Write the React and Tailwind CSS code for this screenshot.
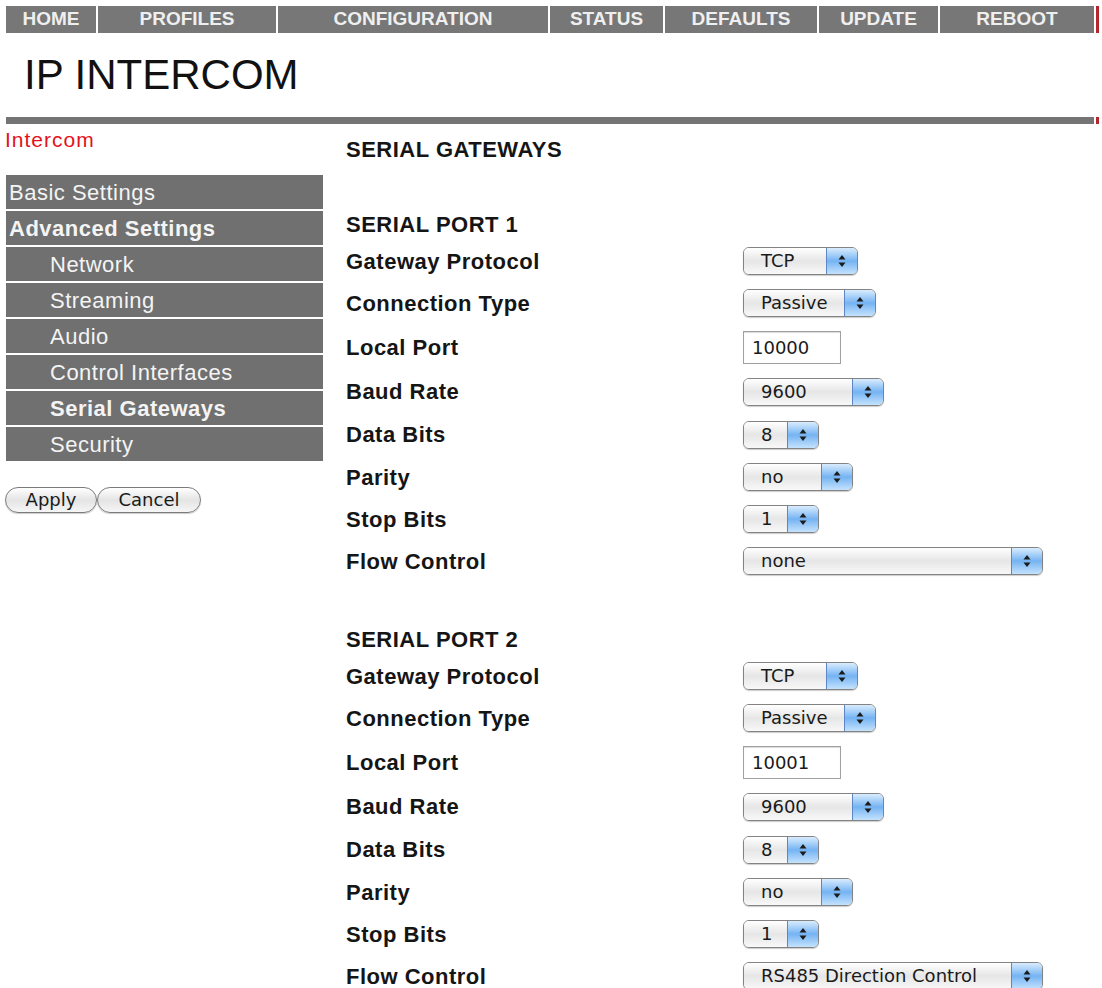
import React from 'react';

const NAV_ITEMS = [
  { label: 'HOME', w: 'w-[90px]' },
  { label: 'PROFILES', w: 'w-[178px]' },
  { label: 'CONFIGURATION', w: 'w-[270px]' },
  { label: 'STATUS', w: 'w-[113px]' },
  { label: 'DEFAULTS', w: 'w-[152px]' },
  { label: 'UPDATE', w: 'w-[119px]' },
  { label: 'REBOOT', w: 'w-[154px]' },
];

const MENU = [
  { label: 'Basic Settings', sub: false, bold: false },
  { label: 'Advanced Settings', sub: false, bold: true },
  { label: 'Network', sub: true, bold: false },
  { label: 'Streaming', sub: true, bold: false },
  { label: 'Audio', sub: true, bold: false },
  { label: 'Control Interfaces', sub: true, bold: false },
  { label: 'Serial Gateways', sub: true, bold: true },
  { label: 'Security', sub: true, bold: false },
];

const UpDownArrows = () => (
  <svg width="8" height="12" viewBox="0 0 8 12">
    <polygon points="4,0 7.5,4.5 0.5,4.5" fill="#1b1b1b" />
    <polygon points="0.5,7.5 7.5,7.5 4,12" fill="#1b1b1b" />
  </svg>
);

// mac "aqua" style popup button
const AquaSelect = ({ value, className }) => (
  <div
    className={`${className} flex h-[28px] overflow-hidden rounded-[6px] border border-[#838383] shadow-[0_1px_1px_rgba(0,0,0,0.2)]`}
  >
    <div className="flex flex-1 items-center bg-linear-to-b from-[#ffffff] via-[#e6e6e6] to-[#f8f8f8] pl-[17px] font-['DejaVu_Sans',Verdana,sans-serif] text-[18px] leading-none text-[#1a1a1a] whitespace-nowrap">
      {value}
    </div>
    <div className="flex w-[31px] items-center justify-center border-l border-[#5c87c4] bg-linear-to-b from-[#d9ecfd] via-[#74b3f2] to-[#c4e2fd]">
      <UpDownArrows />
    </div>
  </div>
);

const PortInput = ({ value }) => (
  <div className="flex h-[33px] w-[98px] items-center border border-[#a0a0a0] bg-white pl-[8px] shadow-[inset_0_1px_1px_rgba(0,0,0,0.15)] font-['DejaVu_Sans',Verdana,sans-serif] text-[18px] text-[#1a1a1a]">
    {value}
  </div>
);

const portRows = (port, flow) => [
  { label: 'Gateway Protocol', h: 'h-[42px]', ctrl: <AquaSelect value="TCP" className="w-[115px]" /> },
  { label: 'Connection Type', h: 'h-[42px]', ctrl: <AquaSelect value="Passive" className="w-[133px]" /> },
  { label: 'Local Port', h: 'h-[46px]', ctrl: <PortInput value={port} /> },
  { label: 'Baud Rate', h: 'h-[43px]', ctrl: <AquaSelect value="9600" className="w-[141px]" /> },
  { label: 'Data Bits', h: 'h-[43px]', ctrl: <AquaSelect value="8" className="w-[76px]" /> },
  { label: 'Parity', h: 'h-[42px]', ctrl: <AquaSelect value="no" className="w-[110px]" /> },
  { label: 'Stop Bits', h: 'h-[42px]', ctrl: <AquaSelect value="1" className="w-[76px]" /> },
  { label: 'Flow Control', h: 'h-[42px]', ctrl: <AquaSelect value={flow} className="w-[300px]" /> },
];

const SerialPort = ({ title, port, flow, className }) => (
  <div className={className}>
    <div className="text-[22px] font-bold leading-[24px] tracking-[0.5px] text-[#151515]">{title}</div>
    <div className="mt-[3px]">
      {portRows(port, flow).map((row) => (
        <div key={row.label} className={`${row.h} flex items-center`}>
          <div className="w-[397px] text-[22px] font-bold tracking-[0.5px] text-[#151515]">{row.label}</div>
          {row.ctrl}
        </div>
      ))}
    </div>
  </div>
);

const AquaButton = ({ children, className }) => (
  <button
    className={`${className} h-[26px] rounded-full border border-[#7b7b7b] bg-linear-to-b from-[#ffffff] via-[#e4e4e4] to-[#f6f6f6] font-['DejaVu_Sans',Verdana,sans-serif] text-[18px] leading-none text-[#1a1a1a] shadow-[0_1px_1px_rgba(0,0,0,0.2)]`}
  >
    {children}
  </button>
);

export default function App() {
  return (
    <div className="min-h-screen bg-white font-['Liberation_Sans',Arial,sans-serif] text-[#111]">
      {/* top navigation */}
      <div className="flex h-[33px] gap-[2px] pl-[6px] pt-[6px]">
        {NAV_ITEMS.map((item) => (
          <div
            key={item.label}
            className={`${item.w} flex items-center justify-center bg-[#777777] text-[19px] font-bold text-[#efefef]`}
          >
            {item.label}
          </div>
        ))}
        <div className="w-[3px] bg-[#b3262d]" />
      </div>

      <h1 className="ml-[24px] mt-[21px] text-[42px] leading-[42px] text-[#111]">IP INTERCOM</h1>

      <div className="ml-[6px] mt-[21px] flex h-[7px] gap-[2px]">
        <div className="w-[1088px] bg-[#747474]" />
        <div className="w-[3px] bg-[#b3262d]" />
      </div>

      <div className="flex">
        {/* left menu */}
        <div className="w-[323px] shrink-0">
          <div className="pl-[5px] pt-[6px] text-[21px] leading-[20px] tracking-[1px] text-[#e3121c]">Intercom</div>
          <div className="ml-[6px] mt-[25px] flex w-[317px] flex-col gap-[2px]">
            {MENU.map((item) => (
              <div
                key={item.label}
                className={`flex h-[34px] items-center bg-[#707070] text-[22px] tracking-[0.5px] text-[#f4f4f4] ${
                  item.sub ? 'pl-[44px]' : 'pl-[3px]'
                } ${item.bold ? 'font-bold' : ''}`}
              >
                {item.label}
              </div>
            ))}
          </div>
          <div className="ml-[5px] mt-[26px] flex">
            <AquaButton className="w-[92px]">Apply</AquaButton>
            <AquaButton className="w-[104px]">Cancel</AquaButton>
          </div>
        </div>

        {/* serial gateway settings */}
        <div className="ml-[23px] flex-1">
          <div className="mt-[14px] text-[22px] font-bold leading-[24px] tracking-[0.5px] text-[#151515]">
            SERIAL GATEWAYS
          </div>
          <SerialPort className="mt-[51px]" title="SERIAL PORT 1" port="10000" flow="none" />
          <SerialPort className="mt-[46px]" title="SERIAL PORT 2" port="10001" flow="RS485 Direction Control" />
        </div>
      </div>
    </div>
  );
}
